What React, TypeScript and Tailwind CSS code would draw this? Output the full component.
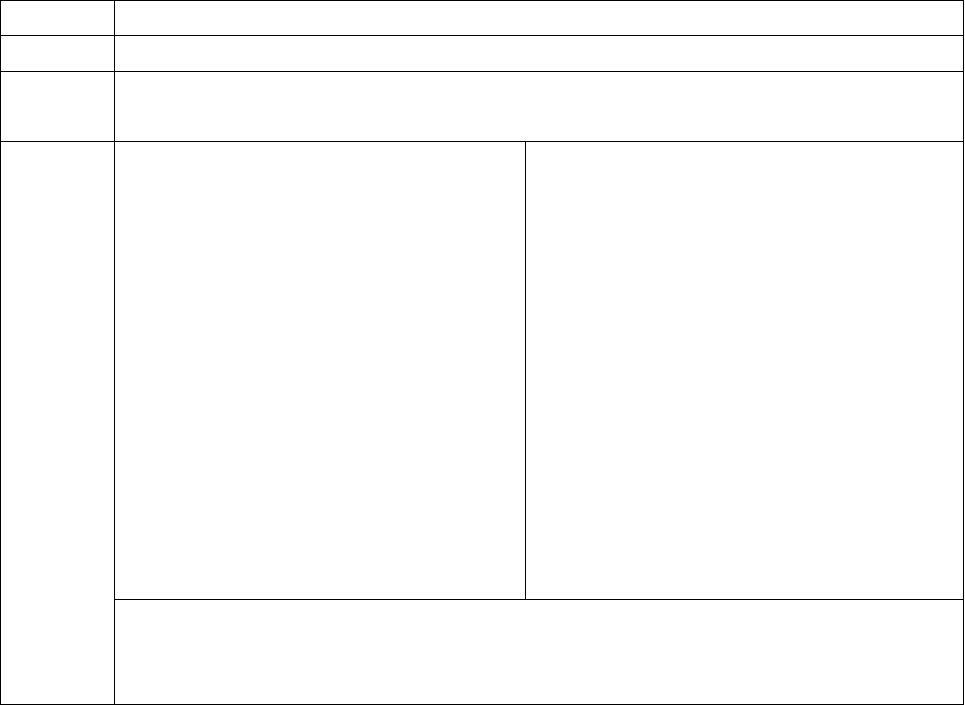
const Cell = ({ className = "" }: { className?: string }) => (
  <div className={`border-black ${className}`} />
);

const App = () => {
  return (
    <div className="w-[965px] h-[705px] bg-white">
      <div className="w-[964px] h-[705px] border border-black flex flex-col">
        <div className="flex h-[35px] border-b border-black">
          <Cell className="w-[114px] border-r" />
          <Cell className="flex-1" />
        </div>
        <div className="flex h-[36px] border-b border-black">
          <Cell className="w-[114px] border-r" />
          <Cell className="flex-1" />
        </div>
        <div className="flex h-[70px] border-b border-black">
          <Cell className="w-[114px] border-r" />
          <Cell className="flex-1" />
        </div>
        <div className="flex flex-1">
          <Cell className="w-[114px] border-r" />
          <div className="flex-1 flex flex-col">
            <div className="flex h-[458px] border-b border-black">
              <Cell className="w-[411px] border-r" />
              <Cell className="flex-1" />
            </div>
            <Cell className="flex-1" />
          </div>
        </div>
      </div>
    </div>
  );
};

export default App;
